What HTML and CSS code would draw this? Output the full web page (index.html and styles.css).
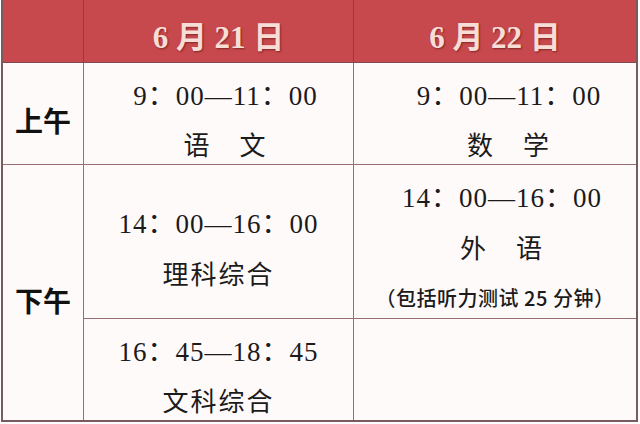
FILE: index.html
```html
<!DOCTYPE html>
<html lang="zh-CN">
<head>
<meta charset="utf-8">
<title>考试时间安排</title>
<link rel="stylesheet" href="styles.css">
</head>
<body>
<div class="sheet">
  <div class="cell head"></div>
  <div class="cell head">6 月 21 日</div>
  <div class="cell head last">6 月 22 日</div>

  <div class="cell label am">上午</div>
  <div class="cell slot shift-a">
    <div class="time">9：00—11：00</div>
    <div class="subj">语　文</div>
  </div>
  <div class="cell slot last shift-b">
    <div class="time">9：00—11：00</div>
    <div class="subj">数　学</div>
  </div>

  <div class="cell label pm">下午</div>
  <div class="cell slot tall">
    <div class="time">14：00—16：00</div>
    <div class="subj">理科综合</div>
  </div>
  <div class="cell slot tall last shift-c">
    <div class="time">14：00—16：00</div>
    <div class="subj">外　语</div>
    <div class="note">（包括听力测试 25 分钟）</div>
  </div>

  <div class="cell slot bottom">
    <div class="time">16：45—18：45</div>
    <div class="subj">文科综合</div>
  </div>
  <div class="cell slot bottom last"></div>
</div>
</body>
</html>
```

FILE: styles.css
```css
html, body {
  margin: 0;
  padding: 0;
  background: #ffffff;
}

body {
  font-family: "Liberation Serif", "Noto Sans CJK SC", serif;
  color: #1b1b1b;
}

.sheet {
  margin-left: 1px;
  width: 637px;
  box-sizing: border-box;
  display: grid;
  grid-template-columns: 81px 270px 282px;
  grid-template-rows: 63px 102px 154px 101px;
  border: 2px solid #7b5a5f;
  border-top: 0;
}

.cell {
  box-sizing: border-box;
  background: #fffafa;
  border-right: 1px solid #9a6e74;
  border-bottom: 1px solid #9a6e74;
  display: flex;
  flex-direction: column;
  align-items: center;
  justify-content: center;
}

.cell.last {
  border-right: 0;
}

.cell.bottom {
  border-bottom: 0;
}

.head {
  background: #c8494d;
  border-right-color: #a5353a;
  border-bottom-color: #7c4a50;
  font-weight: bold;
  font-size: 31px;
  color: #f8ddd6;
  text-shadow: 1px 1px 2px rgba(70, 10, 10, 0.55);
  padding-top: 6px;
}

.label {
  font-family: "Noto Sans CJK SC", sans-serif;
  font-weight: bold;
  font-size: 28px;
  color: #111111;
}

.label.am {
  padding-top: 12px;
}

.label.pm {
  grid-row: 3 / span 2;
  grid-column: 1;
  border-bottom: 0;
  padding-top: 14px;
}

.slot {
  padding-top: 13px;
}

.slot.tall {
  padding-top: 14px;
}

.shift-a {
  padding-left: 14px;
}

.shift-b {
  padding-left: 28px;
}

.shift-c {
  padding-left: 14px;
}

.time {
  font-size: 27px;
  line-height: 48px;
  letter-spacing: 1px;
  white-space: nowrap;
}

.subj {
  font-family: "Noto Sans CJK SC", sans-serif;
  font-size: 26px;
  line-height: 48px;
  letter-spacing: 2px;
  white-space: nowrap;
}

.tall .subj {
  line-height: 50px;
}

.note {
  font-family: "Noto Sans CJK SC", sans-serif;
  font-size: 20px;
  font-weight: 500;
  line-height: 52px;
  letter-spacing: 0.5px;
  white-space: nowrap;
  margin-left: -14px;
}
```
